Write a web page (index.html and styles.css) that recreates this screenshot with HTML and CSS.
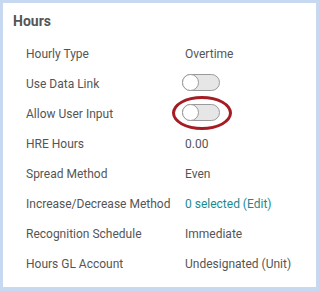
FILE: index.html
```html
<!DOCTYPE html>
<html lang="en">
<head>
  <meta charset="UTF-8" />
  <title>Hours</title>
  <link rel="stylesheet" href="styles.css">
</head>
<body>
  <div class="card">
    <h2>Hours</h2>
    <div class="fields">
      <div class="label">Hourly Type</div>
      <div class="value">Overtime</div>

      <div class="label">Use Data Link</div>
      <div class="value"><span class="toggle"></span></div>

      <div class="label">Allow User Input</div>
      <div class="value"><span class="toggle marked"></span></div>

      <div class="label">HRE Hours</div>
      <div class="value">0.00</div>

      <div class="label">Spread Method</div>
      <div class="value">Even</div>

      <div class="label">Increase/Decrease Method</div>
      <div class="value link">0 selected (Edit)</div>

      <div class="label">Recognition Schedule</div>
      <div class="value">Immediate</div>

      <div class="label">Hours GL Account</div>
      <div class="value">Undesignated (Unit)</div>
    </div>
  </div>
</body>
</html>
```

FILE: styles.css
```css
html, body {
  margin: 0;
  padding: 0;
  background: #c6d9f0;
  font-family: Roboto, 'Liberation Sans', sans-serif;
}

.card {
  margin: 3px 3px 4px 3px;
  height: 284px;
  box-sizing: border-box;
  background: #fff;
  padding: 8px 0 0 10px;
}

h2 {
  margin: 0 0 8px 0;
  font-size: 14px;
  line-height: 20px;
  font-weight: bold;
  color: #555;
}

.fields {
  display: grid;
  grid-template-columns: 159px 1fr;
  grid-auto-rows: 30px;
  padding-left: 13px;
  font-size: 12px;
  color: #555;
}

.label, .value {
  display: flex;
  align-items: center;
}

.link {
  color: #1a8a8f;
}

.toggle {
  position: relative;
  display: inline-block;
  width: 36px;
  height: 15px;
  margin-left: -3px;
  margin-top: -3px;
  border: 1px solid #9a9a9a;
  border-radius: 9px;
  background: #e6e6e6;
}

.toggle::before {
  content: "";
  position: absolute;
  left: -1px;
  top: -1px;
  width: 15px;
  height: 15px;
  border: 1px solid #9a9a9a;
  border-radius: 50%;
  background: #fff;
}

.marked::after {
  content: "";
  position: absolute;
  left: -11px;
  top: -9px;
  width: 54px;
  height: 28px;
  border: 3px solid #a51d24;
  border-radius: 50%;
}
```
